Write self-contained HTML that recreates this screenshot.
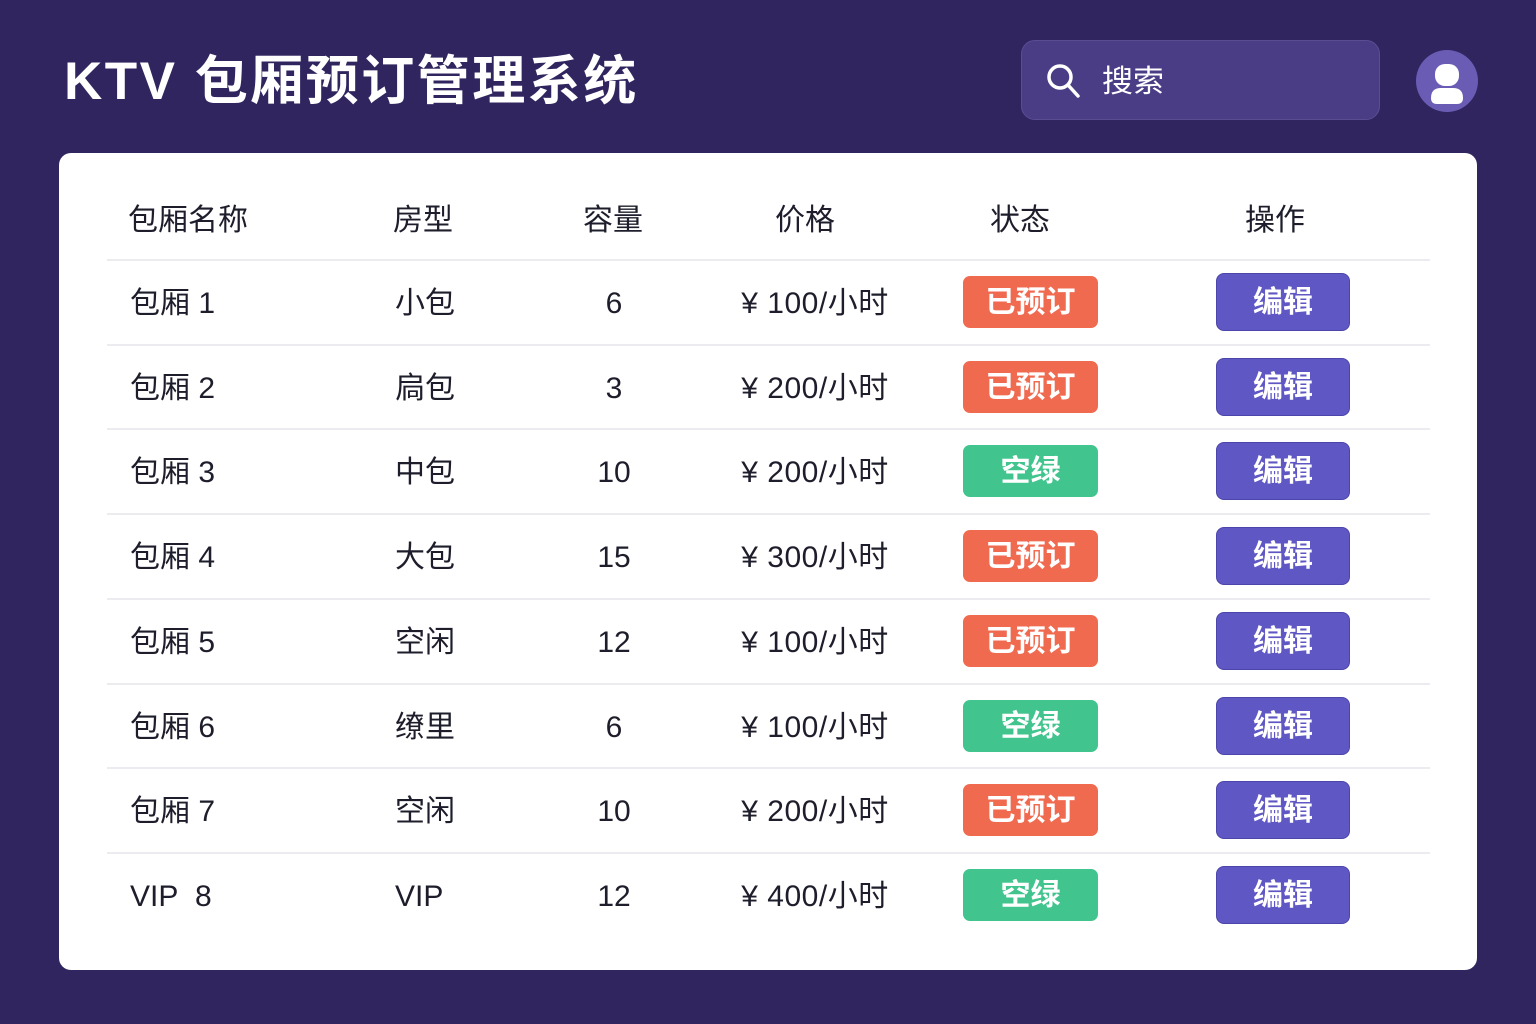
<!DOCTYPE html>
<html><head><meta charset="utf-8"><style>
*{margin:0;padding:0;box-sizing:border-box}
body{width:1536px;height:1024px;background:#30255f;font-family:"Liberation Sans","Noto Sans CJK SC",sans-serif;position:relative;overflow:hidden}
.title{position:absolute;left:64px;top:50px;font-size:53px;font-weight:bold;color:#fff;line-height:64px;letter-spacing:2.5px}
.search{position:absolute;left:1021px;top:40px;width:359px;height:80px;border-radius:14px;background:#4a3d86;border:1px solid #5a4e93}
.search span{position:absolute;left:80px;top:21px;font-size:31px;color:#fff;line-height:40px}
.avatar{position:absolute;left:1416px;top:50px;width:62px;height:62px;border-radius:50%;background:#6a5cb4}
.card{position:absolute;left:59px;top:153px;width:1418px;height:817px;background:#fff;border-radius:12px}
.c{position:absolute;font-size:30px;color:#1d1d2b;line-height:40px;white-space:nowrap}
.line{position:absolute;left:107px;width:1323px;height:2px;background:#ececf0}
.badge{position:absolute;left:963px;width:135px;height:52px;border-radius:7px;color:#fff;font-size:30px;font-weight:bold;text-align:center;line-height:54px}
.r{background:#f06a50}.g{background:#41c48d}
.btn{position:absolute;left:1216px;width:134px;height:58px;border-radius:8px;background:#5f57c3;border:1px solid #4c45aa;color:#fff;font-size:30px;font-weight:bold;text-align:center;line-height:58px}
</style></head><body>
<div class="title">KTV 包厢预订管理系统</div>
<div class="search"><svg style="position:absolute;left:22px;top:20px" width="40" height="40" viewBox="0 0 40 40"><circle cx="16" cy="16" r="11" fill="none" stroke="#fff" stroke-width="3.5"/><line x1="24" y1="24" x2="34" y2="35" stroke="#fff" stroke-width="3.5" stroke-linecap="round"/></svg><span>搜索</span></div>
<div class="avatar"><svg width="62" height="62" viewBox="0 0 62 62"><rect x="19" y="14" width="24" height="22" rx="10" fill="#fff"/><path d="M15 48 Q15 38 25 38 L37 38 Q47 38 47 48 Q47 54 41 54 L21 54 Q15 54 15 48Z" fill="#fff"/></svg></div>
<div class="card"></div>
<div class="c" style="left:128px;top:201px">包厢名称</div>
<div class="c" style="left:393px;top:201px">房型</div>
<div class="c" style="left:583px;top:201px">容量</div>
<div class="c" style="left:775px;top:201px">价格</div>
<div class="c" style="left:990px;top:201px">状态</div>
<div class="c" style="left:1245px;top:201px">操作</div>
<div id="rows"></div>
<script>
var d=[["包厢 1","小包","6","¥ 100/小时",1],["包厢 2","扃包","3","¥ 200/小时",1],["包厢 3","中包","10","¥ 200/小时",0],["包厢 4","大包","15","¥ 300/小时",1],["包厢 5","空闲","12","¥ 100/小时",1],["包厢 6","缭里","6","¥ 100/小时",0],["包厢 7","空闲","10","¥ 200/小时",1],["VIP&nbsp; 8","VIP","12","¥ 400/小时",0]];
var h="";
d.forEach(function(r,i){var cy=302+i*84.7;
h+='<div class="line" style="top:'+(cy-43)+'px"></div>';
h+='<div class="c" style="left:130px;top:'+(cy-18)+'px">'+r[0]+'</div>';
h+='<div class="c" style="left:395px;top:'+(cy-18)+'px">'+r[1]+'</div>';
h+='<div class="c" style="left:564px;width:100px;text-align:center;top:'+(cy-18)+'px">'+r[2]+'</div>';
h+='<div class="c" style="left:715px;width:200px;text-align:center;top:'+(cy-18)+'px;letter-spacing:0.5px">'+r[3]+'</div>';
h+='<div class="badge '+(r[4]?'r':'g')+'" style="top:'+(cy-26)+'px">'+(r[4]?'已预订':'空绿')+'</div>';
h+='<div class="btn" style="top:'+(cy-29)+'px">编辑</div>';});
document.getElementById("rows").innerHTML=h;
</script>
</body></html>
